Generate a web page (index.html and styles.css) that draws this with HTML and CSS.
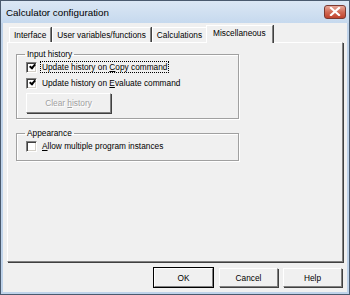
FILE: index.html
```html
<!DOCTYPE html>
<html>
<head>
<meta charset="utf-8">
<link rel="stylesheet" href="styles.css">
</head>
<body>
<div class="window">
  <div class="titlebar">
    <span class="title">Calculator configuration</span>
    <span class="close"><svg width="12" height="9" viewBox="0 0 12 9"><path d="M2 1 L10 8 M10 1 L2 8" stroke="#fff" stroke-width="2.2" stroke-linecap="square"/></svg></span>
  </div>
  <div class="client">
    <div class="tabs">
      <div class="tab">Interface</div>
      <div class="tab">User variables/functions</div>
      <div class="tab">Calculations</div>
      <div class="tab active">Miscellaneous</div>
    </div>
    <div class="panel">
      <fieldset class="group g1">
        <legend>Input history</legend>
        <div class="check"><span class="box checked"></span><span class="label focus">Update history on <u>C</u>opy command</span></div>
        <div class="check"><span class="box checked"></span><span class="label">Update history on <u>E</u>valuate command</span></div>
        <div class="btn disabled"><span>Clear <u>h</u>istory</span></div>
      </fieldset>
      <fieldset class="group g2">
        <legend>Appearance</legend>
        <div class="check"><span class="box"></span><span class="label"><u>A</u>llow multiple program instances</span></div>
      </fieldset>
    </div>
    <div class="buttons">
      <div class="btn default">OK</div>
      <div class="btn">Cancel</div>
      <div class="btn">Help</div>
    </div>
  </div>
</div>
</body>
</html>
```

FILE: styles.css
```css
html, body { margin: 0; padding: 0; }
body { font-family: "Liberation Sans", Arial, sans-serif; font-size: 8.3px; color: #000; }
.window {
  width: 350px; height: 295px; box-sizing: border-box;
  border: 1px solid #4a5a6e;
  background: #bfd3ea;
  display: flex; flex-direction: column;
  padding: 0 2px 2px 2px;
}
.titlebar {
  height: 22px; flex: none;
  display: flex; align-items: center; justify-content: space-between;
  background: linear-gradient(#dbe7f4, #c6d9ee);
  margin: 0 -2px; padding: 0 3px 0 5px;
}
.title { font-size: 9.8px; color: #000; padding-top: 1px; }
.close {
  width: 22px; height: 14px; box-sizing: border-box;
  border: 1px solid #7a3a32; border-radius: 3px;
  background: linear-gradient(#e8a99a, #d16a55 50%, #c0432e);
  display: flex; align-items: center; justify-content: center;
  margin-top: -1px;
}
.client {
  flex: 1; background: #f0f0f0;
  display: flex; flex-direction: column;
  padding: 2px 4px 5px 4px;
}
.tabs { display: flex; height: 17px; padding-left: 2px; align-items: flex-end; position: relative; z-index: 1; }
.tab {
  height: 15px; box-sizing: border-box;
  padding: 2px 4px 0 4px;
  border-top: 1px solid #fff; border-left: 1px solid #fff;
  border-right: 1px solid #808080;
  box-shadow: 1px 0 0 #404040;
  margin-right: 1px;
  white-space: nowrap;
}
.tab.active {
  padding: 2px 6px 0 6px; margin-left: -2px; margin-right: 0;
  background: #f0f0f0; margin-bottom: -1px; height: 18px;
}
.panel {
  flex: 1; box-sizing: border-box;
  border-top: 1px solid #fff; border-left: 1px solid #fff;
  border-right: 1px solid #808080; border-bottom: 1px solid #808080;
  box-shadow: 1px 1px 0 #404040;
  padding: 6px 103px 0 8px;
  display: flex; flex-direction: column;
}
.group {
  margin: 0; padding: 0 0 0 9px;
  border: 1px solid #a0a0a0;
  box-shadow: inset 1px 1px 0 #fff, 1px 1px 0 #fff;
}
.group legend { padding: 0 2px; margin-left: -1px; }
.g1 { height: 70px; box-sizing: border-box; padding-top: 2px; }
.g2 { height: 33px; box-sizing: border-box; margin-top: 9px; padding-top: 2px; }
.check { display: flex; align-items: center; height: 12px; margin-bottom: 4px; }
.box {
  width: 11px; height: 11px; box-sizing: border-box; flex: none;
  background: #fff;
  border-top: 1px solid #808080; border-left: 1px solid #808080;
  border-right: 1px solid #fff; border-bottom: 1px solid #fff;
  box-shadow: inset 1px 1px 0 #404040, inset -1px -1px 0 #d4d0c8;
  margin-right: 3px; position: relative;
}
.box.checked::after {
  content: ""; position: absolute;
  width: 4px; height: 2px;
  border-left: 2px solid #000; border-bottom: 2px solid #000;
  transform: rotate(-50deg); transform-origin: 0 0;
  left: 2px; top: 4px;
}
.label { padding: 0 1px; border: 1px dotted transparent; line-height: 10px; }
.label.focus { border-color: #000; }
.btn {
  display: flex; align-items: center; justify-content: center;
  box-sizing: border-box;
  border-top: 1px solid #fff; border-left: 1px solid #fff;
  border-right: 1px solid #808080; border-bottom: 1px solid #808080;
  box-shadow: 1px 1px 0 #404040;
  background: #f0f0f0;
}
.btn.disabled {
  width: 85px; height: 20px; color: #a0a0a0;
  text-shadow: 1px 1px 0 #fff;
  margin-top: 1px;
}
.buttons { display: flex; justify-content: flex-end; gap: 5px; padding-top: 6px; padding-right: 1px; }
.buttons .btn { width: 59px; height: 19px; }
.btn.default { outline: 1px solid #000; outline-offset: 0; margin-right: 1px; }
```
